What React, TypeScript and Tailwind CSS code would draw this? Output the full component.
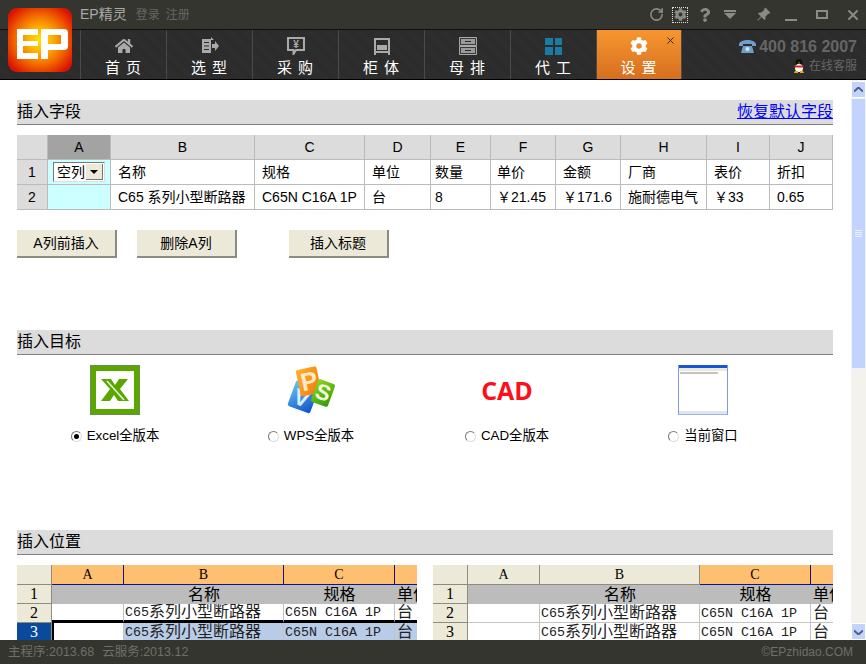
import React from 'react';
import { FaHome, FaCog, FaQuestion } from 'react-icons/fa';
import { BsPinAngleFill } from 'react-icons/bs';
import { RotateCw, X } from 'lucide-react';

const CJK = "font-['Liberation_Sans','Noto_Sans_CJK_SC',sans-serif]";

function Logo() {
  return (
    <div className="absolute left-[8px] top-[8px] w-[64px] h-[64px] rounded-[9px] bg-[radial-gradient(circle_at_50%_50%,#ffe600_0%,#ffb000_28%,#f26a00_55%,#dd1500_85%,#d40a00_100%)]">
      <svg width="64" height="64" viewBox="0 0 64 64" fill="#fff">
        <path d="M9 21h21v6H15v6h15v5H15v7h15v6H9z" />
        <path d="M33 21h23a4 4 0 0 1 4 4v13a4 4 0 0 1-4 4H40v9h-7zM40 27v9h13v-9z" fillRule="evenodd" />
      </svg>
    </div>
  );
}

function SelectIcon() {
  return (
    <svg width="18" height="18" viewBox="0 0 18 18" fill="#aaa">
      <path d="M1 2h9v14H1z" />
      <path d="M3 5h5v1H3zM3 8.500h5v1H3zM3 12h5v1H3z" fill="#2b2b2b" />
      <path d="M10 0l3 3-3 0zM11 7h3V4l4 5-4 5v-3h-3z" />
    </svg>
  );
}

function BuyIcon() {
  return (
    <svg width="18" height="18" viewBox="0 0 18 18">
      <path d="M1 1h16v12H9l-2.500 4V13H1z" fill="none" stroke="#aaa" strokeWidth="2" />
      <text x="9" y="11" textAnchor="middle" fontSize="10" fontWeight="700" fill="#aaa" fontFamily="Liberation Sans">¥</text>
    </svg>
  );
}

function CabinetIcon() {
  return (
    <svg width="18" height="18" viewBox="0 0 18 18" fill="#aaa">
      <path d="M1 1h16v17h-2v-2H3v2H1zM3 3v11h12V3z" fillRule="evenodd" />
      <path d="M4 8h10v5H4z" />
    </svg>
  );
}

function BusbarIcon() {
  return (
    <svg width="18" height="18" viewBox="0 0 18 18">
      <path d="M.5.5h17v8H.5zM.5 9.500h17v8H.5z" fill="#3a3a3a" stroke="#aaa" />
      <path d="M2 2h14v5H2zM2 11h14v5H2z" fill="#9a9a9a" />
      <path d="M6 4h6v1H6zM6 13h6v1H6z" fill="#2b2b2b" />
    </svg>
  );
}

function OemIcon() {
  return (
    <div className="grid grid-cols-2 gap-[2px] w-[17px] h-[17px]">
      <div className="bg-[#1c7aa6]" />
      <div className="bg-[#1c7aa6]" />
      <div className="bg-[#1c7aa6]" />
      <div className="bg-[#1c7aa6]" />
    </div>
  );
}

const TABS = [
  { label: '首 页', icon: <FaHome size={18} color="#aaa" /> },
  { label: '选 型', icon: <SelectIcon /> },
  { label: '采 购', icon: <BuyIcon /> },
  { label: '柜 体', icon: <CabinetIcon /> },
  { label: '母 排', icon: <BusbarIcon /> },
  { label: '代 工', icon: <OemIcon /> },
];

function TitleBar() {
  return (
    <div className="h-[29px] bg-[#353530] flex items-center pl-[80px] pr-[5px] shrink-0">
      <span className="text-[14px] text-[#aaa]">EP精灵</span>
      <span className="ml-[9px] text-[12px] text-[#666]">登录</span>
      <span className="ml-[6px] text-[12px] text-[#666]">注册</span>
      <div className="ml-auto flex items-center text-[#8a8a86]">
        <RotateCw size={15} strokeWidth={2.5} />
        <div className="ml-[8px] w-[16px] h-[16px] border border-dotted border-[#ddd] flex items-center justify-center">
          <FaCog size={13} />
        </div>
        <FaQuestion size={14} className="ml-[10px]" />
        <div className="ml-[12px] flex flex-col items-center gap-[1px] w-[12px]">
          <div className="w-[12px] h-[2px] bg-[#8a8a86]" />
          <div className="w-0 h-0 border-x-[6px] border-x-transparent border-t-[6px] border-t-[#8a8a86]" />
        </div>
        <BsPinAngleFill size={15} className="ml-[20px]" />
        <div className="ml-[14px] w-[12px] h-[2px] mt-[10px] bg-[#8a8a86]" />
        <div className="ml-[19px] w-[12px] h-[9px] border-2 border-[#8a8a86]" />
        <X size={16} strokeWidth={3} className="ml-[17px]" />
      </div>
    </div>
  );
}

function NavBar() {
  return (
    <div className="h-[51px] shrink-0 flex pl-[80px] border-t border-t-[#111] border-b border-b-black bg-[repeating-linear-gradient(45deg,#2a2a2a_0px,#2a2a2a_1px,#2f2f2f_1px,#2f2f2f_2px)]">
      {TABS.map((t) => (
        <div key={t.label} className="w-[86px] flex flex-col items-center pt-[7px] border-l border-l-[#4a4a4a]">
          <div className="h-[18px] flex items-center">{t.icon}</div>
          <span className="text-[15px] leading-[20px] mt-[3px] text-white tracking-[1px] whitespace-pre">{t.label}</span>
        </div>
      ))}
      <div className="relative w-[86px] flex flex-col items-center pt-[7px] bg-gradient-to-b from-[#f7962f] to-[#d66f1f] border-l border-l-[#4a4a4a] border-r border-r-[#4a4a4a]">
        <FaCog size={18} color="#fff" />
        <span className="text-[15px] leading-[20px] mt-[3px] text-white tracking-[1px] whitespace-pre">设 置</span>
        <X size={11} color="#222" className="absolute right-[5px] top-[5px]" />
      </div>
      <div className="flex-1 flex flex-col items-end pr-[9px] pt-[7px]">
        <div className="flex items-center gap-[3px]">
          <svg width="17" height="14" viewBox="0 0 17 14" fill="#6fa0cc">
            <path d="M0 4c1-3 5-4 8.500-4S16 1 17 4v2h-4V4H4v2H0z" />
            <path d="M4 6h9l2 7H2z" />
            <circle cx="8.500" cy="9" r="2" fill="#d5e4f2" />
          </svg>
          <span className="text-[16px] leading-[20px] font-bold text-[#666]">400 816 2007</span>
        </div>
        <div className="flex items-center gap-[4px] mt-[1px]">
          <svg width="12" height="14" viewBox="0 0 12 14">
            <ellipse cx="6" cy="4" rx="3.500" ry="4" fill="#111" />
            <ellipse cx="6" cy="9" rx="4" ry="4" fill="#fff" />
            <path d="M1.500 6.500h9v2h-9z" fill="#d42020" />
            <path d="M2 12h3v2H1zM7 12h3l1 2H7z" fill="#f2a900" />
            <path d="M5 3.500h2l-1 1.500z" fill="#f2a900" />
          </svg>
          <span className="text-[12px] leading-[16px] text-[#666]">在线客服</span>
        </div>
      </div>
    </div>
  );
}

function SectionHeader({ title, link }: { title: string; link?: string }) {
  return (
    <div className="h-[25px] bg-[#dcdcdc] border-b border-b-[#808080] flex items-center justify-between">
      <span className="text-[16px] leading-[24px] text-black">{title}</span>
      {link && <a className="text-[16px] leading-[24px] text-[#0000ff] underline">{link}</a>}
    </div>
  );
}

const COLS = ['A', 'B', 'C', 'D', 'E', 'F', 'G', 'H', 'I', 'J'];
const ROW1 = ['名称', '规格', '单位', '数量', '单价', '金额', '厂商', '表价', '折扣'];
const ROW2 = ['C65 系列小型断路器', 'C65N C16A 1P', '台', '8', '￥21.45', '￥171.6', '施耐德电气', '￥33', '0.65'];
const PADS = ['pl-[7px]', 'pl-[7px]', 'pl-[7px]', 'pl-[4px]', 'pl-[6px]', 'pl-[7px]', 'pl-[7px]', 'pl-[7px]', 'pl-[7px]'];

function FieldTable() {
  const cell = 'h-[25px] border-r border-b border-[#bbbbbb] flex items-center text-[14px] text-black';
  return (
    <div className="mt-[10px] grid grid-cols-[31px_63px_144px_110px_66px_60px_65px_65px_86px_63px_63px]">
      <div className={`${cell} bg-[#dcdcdc]`} />
      {COLS.map((c, i) => (
        <div key={c} className={`${cell} justify-center ${i === 0 ? 'bg-[#a3a3a3]' : 'bg-[#dcdcdc]'}`}>{c}</div>
      ))}
      <div className={`${cell} justify-center bg-[#dcdcdc] text-[14px]`}>1</div>
      <div className={`${cell} bg-[#ccffff] pl-[5px]`}>
        <div className="w-[52px] h-[20px] flex items-center justify-between bg-white border border-t-[#777] border-l-[#777] border-r-[#ddd] border-b-[#ddd] pl-[3px] pr-[1px]">
          <span className="text-[14px] leading-[16px]">空列</span>
          <div className="w-[17px] h-[16px] bg-[#ece9d8] border-r border-b border-[#777] flex items-center justify-center">
            <div className="w-0 h-0 border-x-[4px] border-x-transparent border-t-[4px] border-t-black" />
          </div>
        </div>
      </div>
      {ROW1.map((t, i) => (
        <div key={t} className={`${cell} bg-white ${PADS[i]}`}>{t}</div>
      ))}
      <div className={`${cell} justify-center bg-[#dcdcdc]`}>2</div>
      <div className={`${cell} bg-[#ccffff]`} />
      {ROW2.map((t, i) => (
        <div key={t} className={`${cell} bg-white whitespace-nowrap ${PADS[i]}`}>{t}</div>
      ))}
    </div>
  );
}

function ActionButton({ label, className }: { label: string; className?: string }) {
  return (
    <button className={`w-[100px] h-[28px] bg-[#ece9d8] border-r-2 border-b-2 border-r-[#8c8c80] border-b-[#8c8c80] text-[14px] text-black ${className ?? ''}`}>
      {label}
    </button>
  );
}

function Radio({ checked }: { checked?: boolean }) {
  return (
    <div className="w-[11px] h-[11px] rounded-full bg-white border border-[#777] border-r-[#ddd] border-b-[#ddd] flex items-center justify-center">
      {checked && <div className="w-[5px] h-[5px] rounded-full bg-black" />}
    </div>
  );
}

function ExcelIcon() {
  return (
    <div className="w-[50px] h-[50px] bg-[#5aa700] border border-[#6f8a55] p-[5px]">
      <div className="w-full h-full bg-white flex items-center justify-center">
        <svg width="30" height="24" viewBox="0 0 30 24">
          <path d="M1 1h10l4 6 4-6h9l-8 10 9 12H18l-4-6-4 6H1l9-12z" fill="#5aa700" />
          <path d="M7 3l17 19" stroke="#e8f5d8" strokeWidth="1.500" />
        </svg>
      </div>
    </div>
  );
}

function WpsIcon() {
  return (
    <svg width="50" height="50" viewBox="0 0 50 50" fontFamily="Liberation Sans" fontWeight="700">
      <defs>
        <linearGradient id="wpsW" x1="0" y1="0" x2="1" y2="1">
          <stop offset="0" stopColor="#6cc4f5" />
          <stop offset="1" stopColor="#0c50c8" />
        </linearGradient>
        <linearGradient id="wpsP" x1="0" y1="0" x2="1" y2="1">
          <stop offset="0" stopColor="#ffb52a" />
          <stop offset="1" stopColor="#f0730a" />
        </linearGradient>
        <linearGradient id="wpsS" x1="0" y1="0" x2="1" y2="1">
          <stop offset="0" stopColor="#8fd620" />
          <stop offset="1" stopColor="#2f9a08" />
        </linearGradient>
      </defs>
      <g transform="rotate(20 16 32)">
        <rect x="5" y="18" width="24" height="27" rx="2" fill="url(#wpsW)" />
        <text x="16" y="41" textAnchor="middle" fontSize="23" fill="#d8eeff">V</text>
      </g>
      <g transform="rotate(-12 22 16)">
        <rect x="12" y="3" width="21" height="27" rx="2" fill="url(#wpsP)" />
        <text x="23" y="25" textAnchor="middle" fontSize="25" fill="#ffe9c8">P</text>
      </g>
      <g transform="rotate(20 37 28)">
        <rect x="28" y="16" width="18" height="24" rx="2" fill="url(#wpsS)" />
        <text x="37" y="35" textAnchor="middle" fontSize="22" fill="#f0ffe0">S</text>
      </g>
    </svg>
  );
}

function WindowThumb() {
  return (
    <div className="w-[50px] h-[50px] bg-white border-x border-x-[#7f9be0] border-b border-b-[#9db4e6] flex flex-col">
      <div className="h-[3px] bg-[#1a55d8]" />
      <div className="h-[3px] bg-[#ece9d8]" />
      <div className="h-[2px] mt-[1px] mx-[1px] w-[38px] bg-[#c4c4c4]" />
      <div className="h-[3px] bg-[#dfe4f2] mt-auto" />
    </div>
  );
}

const TARGETS = [
  { label: 'Excel全版本', icon: <ExcelIcon />, checked: true },
  { label: 'WPS全版本', icon: <WpsIcon /> },
  { label: 'CAD全版本', icon: <span className="text-[25px] leading-[50px] font-bold text-[#ff0d1a] font-['Open_Sans',sans-serif]">CAD</span> },
  { label: '当前窗口', icon: <WindowThumb /> },
];

function Mono({ children }: { children: React.ReactNode }) {
  return <span className="font-['Liberation_Mono',monospace] text-[13.33px]">{children}</span>;
}

function MiniSheet({ hl, selected }: { hl: number[]; selected?: boolean }) {
  const head = "h-[20px] border-r border-b flex items-center justify-center text-[14px] text-black font-['Liberation_Serif',serif]";
  const row = 'h-[19px] border-r border-b border-[#c4c4c4] flex items-center pt-[2px] text-[16px] text-[#222] whitespace-nowrap overflow-hidden';
  const side = "h-[19px] border-r border-b border-[#8c8c80] flex items-center justify-center text-[16px] font-['Liberation_Serif',serif]";
  const band = 'h-[19px] bg-[#bcbcbc] flex items-center pt-[2px] text-[16px] whitespace-nowrap';
  const line = selected ? 'border-b-[3px] border-b-black' : '';
  const fill = selected ? 'bg-[#b8cce8]' : 'bg-white';
  return (
    <div className="w-[400px] h-[75px] overflow-hidden font-['Liberation_Mono','Noto_Sans_CJK_SC',monospace]">
      <div className="grid grid-cols-[35px_72px_160px_111px_60px]">
        <div className="h-[20px] border-r border-b border-[#8c8c80] bg-[#ece9d8]" />
        {['A', 'B', 'C', 'D'].map((c, i) => (
          <div key={c} className={`${head} ${hl.includes(i) ? 'bg-[#ffbf70] border-[#12128c]' : 'bg-[#ece9d8] border-[#8c8c80]'}`}>{c}</div>
        ))}

        <div className={`${side} bg-[#ece9d8] text-black`}>1</div>
        <div className={band} />
        <div className={`${band} justify-center`}>名称</div>
        <div className={`${band} justify-center`}>规格</div>
        <div className={`${band} pl-[2px]`}>单位</div>

        <div className={`${side} bg-[#ece9d8] text-black`}>2</div>
        <div className={`${row} bg-white ${line}`} />
        <div className={`${row} bg-white pl-[1px] ${line}`}><Mono>C65</Mono>系列小型断路器</div>
        <div className={`${row} bg-white pl-[1px] ${line}`}><Mono>C65N C16A 1P</Mono></div>
        <div className={`${row} bg-white pl-[2px] ${line}`}>台</div>

        <div className={`${side} ${selected ? 'bg-[#0a4a9c] text-white' : 'bg-[#ece9d8] text-black'}`}>3</div>
        <div className={`${row} bg-white ${selected ? 'border-l-2 border-l-black' : ''}`} />
        <div className={`${row} pl-[1px] ${fill}`}><Mono>C65</Mono>系列小型断路器</div>
        <div className={`${row} pl-[1px] ${fill}`}><Mono>C65N C16A 1P</Mono></div>
        <div className={`${row} pl-[2px] ${fill}`}>台</div>
      </div>
    </div>
  );
}

function Scrollbar() {
  return (
    <div className="w-[15px] shrink-0 flex flex-col bg-[#f3f2ec]">
      <div className="h-[17px] bg-[#c3d3fb] border border-white flex items-center justify-center mt-[1px]">
        <svg width="9" height="6" viewBox="0 0 9 6"><path d="M0 4.500L4.500 .5 9 4.500" fill="none" stroke="#4d6185" strokeWidth="2" /></svg>
      </div>
      <div className="h-[271px] bg-[#c2d3fc] border border-[#eef2fd] flex items-center justify-center">
        <div className="w-[7px] flex flex-col gap-[1px]">
          <div className="h-[1px] bg-[#eef2fd]" />
          <div className="h-[1px] bg-[#eef2fd]" />
          <div className="h-[1px] bg-[#eef2fd]" />
          <div className="h-[1px] bg-[#eef2fd]" />
        </div>
      </div>
      <div className="mt-auto h-[17px] bg-[#c3d3fb] border border-white flex items-center justify-center">
        <svg width="9" height="6" viewBox="0 0 9 6"><path d="M0 1.500L4.500 5.500 9 1.500" fill="none" stroke="#4d6185" strokeWidth="2" /></svg>
      </div>
    </div>
  );
}

export default function App() {
  return (
    <div className={`relative w-[866px] h-[664px] overflow-hidden flex flex-col bg-white ${CJK}`}>
      <TitleBar />
      <NavBar />
      <div className="flex-1 min-h-0 flex">
        <div className="w-[851px] overflow-hidden pl-[17px] pr-[18px] pt-[20px]">
          <SectionHeader title="插入字段" link="恢复默认字段" />
          <FieldTable />
          <div className="mt-[20px] flex">
            <ActionButton label="A列前插入" />
            <ActionButton label="删除A列" className="ml-[20px]" />
            <ActionButton label="插入标题" className="ml-[52px]" />
          </div>

          <div className="mt-[72px]">
            <SectionHeader title="插入目标" />
          </div>
          <div className="mt-[10px] grid grid-cols-[196px_196px_196px_196px]">
            {TARGETS.map((t) => (
              <div key={t.label} className="flex flex-col items-center">
                <div className="h-[50px] flex items-center justify-center">{t.icon}</div>
                <div className="mt-[12px] h-[18px] flex items-center gap-[5px] text-[13.33px] text-black">
                  <Radio checked={t.checked} />
                  <span>{t.label}</span>
                </div>
              </div>
            ))}
          </div>

          <div className="mt-[85px]">
            <SectionHeader title="插入位置" />
          </div>
          <div className="mt-[10px] flex gap-[16px]">
            <MiniSheet hl={[0, 1, 2, 3]} selected />
            <MiniSheet hl={[2, 3]} />
          </div>
        </div>
        <Scrollbar />
      </div>
      <div className="h-[24px] shrink-0 bg-[#353530] flex items-center justify-between pl-[8px] pr-[13px] text-[12px] text-[#6f6f6b]">
        <div className="text-[12.5px]">
          <span>主程序:2013.68</span>
          <span className="ml-[8px]">云服务:2013.12</span>
        </div>
        <span>©EPzhidao.COM</span>
      </div>
      <Logo />
    </div>
  );
}
